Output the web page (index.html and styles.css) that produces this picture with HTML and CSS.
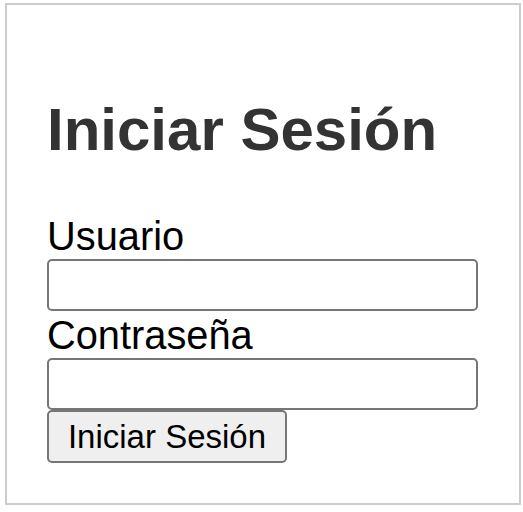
FILE: index.html
```html
<!DOCTYPE html>
<html lang="es">
<head>
<meta charset="utf-8">
<title>Iniciar Sesión</title>
<link rel="stylesheet" href="styles.css">
</head>
<body>
<div class="login">
  <h1 class="title">Iniciar Sesión</h1>
  <form class="form">
    <label class="label" for="user">Usuario</label>
    <input class="field" id="user" type="text">
    <label class="label" for="pass">Contraseña</label>
    <input class="field" id="pass" type="password">
    <button class="btn" type="button">Iniciar Sesión</button>
  </form>
</div>
</body>
</html>
```
FILE: styles.css
```css
html, body {
  margin: 0;
  padding: 0;
  background: #fff;
}
body {
  font-family: "Liberation Sans", Arial, sans-serif;
}
.login {
  box-sizing: border-box;
  width: 516px;
  height: 502px;
  margin: 3px 0 0 5px;
  border: 2px solid #cccccc;
  padding: 40px;
}
.title {
  margin: 50px 0 49px;
  font-size: 60px;
  line-height: 69px;
  font-weight: bold;
  color: #333333;
}
.form {
  display: flex;
  flex-direction: column;
  align-items: flex-start;
}
.label {
  display: block;
  font-size: 39.8px;
  line-height: 46px;
  color: #000;
}
.field + .label {
  margin-top: 1px;
}
.field {
  box-sizing: border-box;
  width: 431px;
  height: 52px;
  margin: 0;
  border: 2px solid #767676;
  border-radius: 5px;
  background: #fff;
  padding: 0 5px;
  font-size: 33px;
  font-family: "Liberation Sans", Arial, sans-serif;
}
.btn {
  box-sizing: border-box;
  width: 240px;
  height: 53px;
  margin: 0;
  border: 2px solid #767676;
  border-radius: 5px;
  background: #efefef;
  color: #000;
  padding: 0;
  font-size: 33px;
  font-family: "Liberation Sans", Arial, sans-serif;
}
```
